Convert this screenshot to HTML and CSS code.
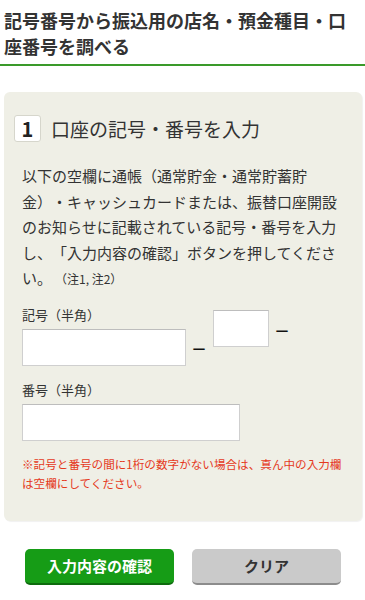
FILE: index.html
```html
<!DOCTYPE html>
<html lang="ja">
<head>
    <meta charset="UTF-8">
    <meta name="viewport" content="width=device-width, initial-scale=1.0">
    <title>記号番号から振込用の店名・預金種目・口座番号を調べる</title>
    <link rel="stylesheet" href="styles.css">
</head>
<body>

<h1 class="page-title">記号番号から振込用の店名・預金種目・口座番号を調べる</h1>

<div class="step-box">
    <h2 class="step-head"><span class="step-num">1</span>口座の記号・番号を入力</h2>

    <p class="step-text">以下の空欄に通帳（通常貯金・通常貯蓄貯<br>金）・キャッシュカードまたは、振替口座開設のお知らせに記載されている記号・番号を入力し、「入力内容の確認」ボタンを押してください。<span class="note-ref">（注1, 注2）</span></p>

    <div class="kigou-row">
        <div class="field">
            <label class="field-label" for="kigou1">記号（半角）</label>
            <input type="text" id="kigou1" class="input-kigou">
        </div>
        <span class="dash dash-low">－</span>
        <input type="text" id="kigou2" class="input-mid">
        <span class="dash dash-high">－</span>
    </div>

    <div class="field">
        <label class="field-label" for="bangou">番号（半角）</label>
        <input type="text" id="bangou" class="input-bangou">
    </div>

    <p class="note">※記号と番号の間に1桁の数字がない場合は、真ん中の入力欄は空欄にしてください。</p>
</div>

<div class="buttons">
    <button class="btn btn-confirm">入力内容の確認</button>
    <button class="btn btn-clear">クリア</button>
</div>

</body>
</html>
```

FILE: styles.css
```css
body {
    margin: 0;
    padding: 0;
    font-family: "Noto Sans CJK JP", "Noto Sans", sans-serif;
    color: #333;
    background: #fff;
    text-spacing-trim: space-all;
}
.page-title {
    margin: 0;
    padding: 7px 6px 5px 4px;
    font-size: 18px;
    line-height: 26px;
    font-weight: bold;
    color: #333;
    border-bottom: 2px solid #3a9a2a;
}
.step-box {
    margin: 26px 3px 0 4px;
    padding: 23px 18px 28px 18px;
    background-color: #efefe6;
    border-radius: 6px;
    box-shadow: 1px 1px 1px rgba(0, 0, 0, 0.06);
}
.step-head {
    display: flex;
    align-items: center;
    margin: 0 0 0 -8px;
    font-size: 19px;
    font-weight: normal;
    line-height: 26px;
    color: #333;
}
.step-num {
    display: inline-block;
    width: 25px;
    height: 25px;
    margin-right: 10px;
    background: #fff;
    border: 1px solid #d6d6cc;
    border-radius: 3px;
    text-align: center;
    font-size: 20px;
    font-weight: bold;
    line-height: 25px;
    color: #222;
}
.step-text {
    margin: 21px 0 0 0;
    font-size: 15px;
    line-height: 25.5px;
    color: #333;
}
.note-ref {
    display: inline-block;
    margin-left: 3px;
    font-size: 12px;
    line-height: 1;
}
.kigou-row {
    display: flex;
    align-items: flex-start;
    margin-top: 15px;
}
.field {
    display: flex;
    flex-direction: column;
}
.field-label {
    font-size: 13px;
    line-height: 18px;
    margin-bottom: 5px;
    color: #333;
}
input[type="text"] {
    box-sizing: border-box;
    height: 37px;
    margin: 0;
    padding: 4px 6px;
    background: #fff;
    border: 1px solid #cfcfcf;
    border-top-color: #bdbdbd;
    border-radius: 0;
    font-size: 16px;
}
.input-kigou {
    width: 164px;
}
.input-mid {
    width: 56px;
    margin-top: 4px !important;
}
.input-bangou {
    width: 218px;
}
.dash {
    display: inline-block;
    width: 16px;
    font-size: 16px;
    font-weight: bold;
    line-height: 20px;
    text-align: center;
    color: #111;
}
.dash-low {
    margin: 32px 6px 0 5px;
}
.dash-high {
    margin: 14px 0 0 5px;
}
.kigou-row + .field {
    margin-top: 15px;
}
.note {
    margin: 14px 0 0 0;
    font-size: 11.6px;
    line-height: 19px;
    color: #e5391c;
}
.buttons {
    display: flex;
    gap: 18px;
    margin-top: 28px;
    padding-left: 25px;
}
.btn {
    box-sizing: border-box;
    width: 149px;
    height: 36px;
    border: none;
    border-radius: 5px;
    font-family: "Noto Sans CJK JP", "Noto Sans", sans-serif;
    font-size: 15px;
    font-weight: bold;
    cursor: pointer;
}
.btn-confirm {
    background-color: #169c16;
    border-bottom: 2px solid #0d6b0d;
    color: #fff;
}
.btn-clear {
    background-color: #cacaca;
    border-bottom: 2px solid #8c8c8c;
    color: #333;
}
```
